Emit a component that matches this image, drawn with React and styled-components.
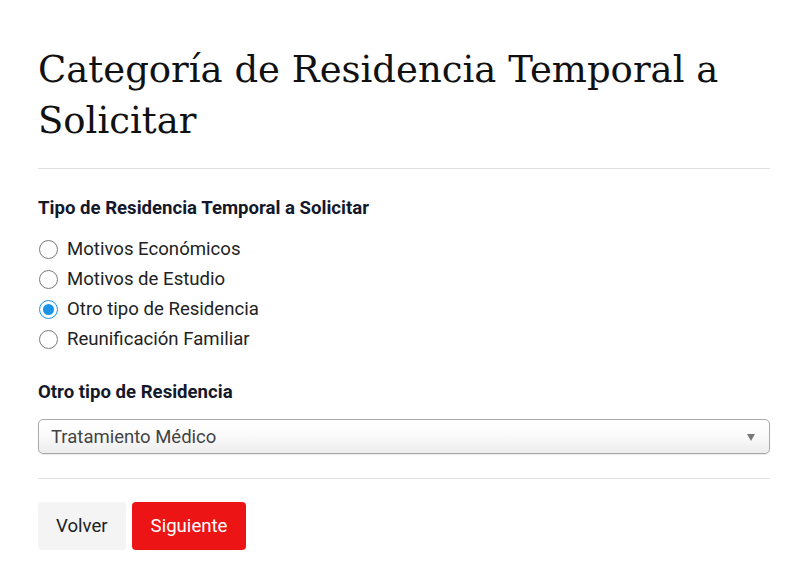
import React, { useState } from 'react';
import styled, { createGlobalStyle } from 'styled-components';

const GlobalStyle = createGlobalStyle`
  html, body {
    margin: 0;
    padding: 0;
    background: #fff;
  }
  body {
    font-family: Roboto, "Liberation Sans", Arial, sans-serif;
    color: #222;
  }
`

const Page = styled.div`
  padding: 44px 30px 30px 38px;
`

const Title = styled.h1`
  font-family: "DejaVu Serif", "Liberation Serif", serif;
  font-weight: 400;
  font-size: 37px;
  line-height: 51px;
  color: #111;
  margin: 0 0 22px;
`

const Divider = styled.hr`
  border: 0;
  border-top: 1px solid #e2e2e6;
  margin: ${props => props.$margin || '0'};
`

const Field = styled.fieldset`
  border: 0;
  padding: 0;
  margin: 0 0 ${props => props.$gap || '31px'};
`

const Label = styled.div`
  font-size: 18.6px;
  line-height: 22px;
  font-weight: 700;
  color: #14182b;
  margin-bottom: ${props => props.$gap || '19px'};
`

const RadioList = styled.div`
  display: flex;
  flex-direction: column;
  gap: 8px;
`

const RadioRow = styled.label`
  display: flex;
  align-items: center;
  gap: 9px;
  font-size: 18.6px;
  line-height: 22px;
  color: #222;
  cursor: pointer;
`

const RadioInput = styled.input`
  appearance: none;
  margin: 0 0 0 1px;
  width: 19px;
  height: 19px;
  border-radius: 50%;
  border: 1.5px solid #7b7b80;
  background: #fff;
  box-sizing: border-box;
  display: grid;
  place-content: center;
  &::before {
    content: '';
    width: 11px;
    height: 11px;
    border-radius: 50%;
    background: #1b93e6;
    transform: scale(0);
  }
  &:checked {
    border-color: #1b93e6;
  }
  &:checked::before {
    transform: scale(1);
  }
`

const SelectWrap = styled.div`
  position: relative;
`

const Select = styled.select`
  appearance: none;
  width: 100%;
  height: 35px;
  padding: 0 30px 0 12px;
  border: 1px solid #a9a9a9;
  border-radius: 5px;
  background: linear-gradient(#ffffff 0%, #fbfbfb 45%, #ececec 100%);
  font-family: Roboto, "Liberation Sans", Arial, sans-serif;
  font-size: 18.5px;
  color: #444;
  box-shadow: 0 1px 1px rgba(0, 0, 0, 0.08);
`

const Caret = styled.span`
  position: absolute;
  right: 15px;
  top: 15px;
  width: 0;
  height: 0;
  border-left: 4.5px solid transparent;
  border-right: 4.5px solid transparent;
  border-top: 7px solid #777;
  pointer-events: none;
`

const Actions = styled.div`
  display: flex;
  gap: 6px;
  margin-top: 23px;
`

const Button = styled.button`
  height: 48px;
  padding: 0 ${props => (props.$primary ? '19px' : '18px')};
  border: 0;
  border-radius: 4px;
  font-family: Roboto, "Liberation Sans", Arial, sans-serif;
  font-size: 18.6px;
  cursor: pointer;
  background: ${props => (props.$primary ? '#ec1414' : '#f4f4f4')};
  color: ${props => (props.$primary ? '#fff' : '#222')};
`

const options = [
  'Motivos Económicos',
  'Motivos de Estudio',
  'Otro tipo de Residencia',
  'Reunificación Familiar',
]

const App = () => {
  const [tipo, setTipo] = useState('Otro tipo de Residencia')
  const [otro, setOtro] = useState('Tratamiento Médico')

  return (
    <>
      <GlobalStyle />
      <Page>
        <Title>Categoría de Residencia Temporal a Solicitar</Title>
        <Divider $margin="0 0 28px" />

        <Field>
          <Label>Tipo de Residencia Temporal a Solicitar</Label>
          <RadioList>
            {options.map(opt => (
              <RadioRow key={opt}>
                <RadioInput
                  type="radio"
                  name="tipo"
                  value={opt}
                  checked={tipo === opt}
                  onChange={() => setTipo(opt)}
                />
                {opt}
              </RadioRow>
            ))}
          </RadioList>
        </Field>

        <Field $gap="24px">
          <Label $gap="16px">Otro tipo de Residencia</Label>
          <SelectWrap>
            <Select value={otro} onChange={e => setOtro(e.target.value)}>
              <option>Tratamiento Médico</option>
              <option>Razones Humanitarias</option>
              <option>Otros</option>
            </Select>
            <Caret />
          </SelectWrap>
        </Field>

        <Divider />

        <Actions>
          <Button>Volver</Button>
          <Button $primary>Siguiente</Button>
        </Actions>
      </Page>
    </>
  )
}

export default App
